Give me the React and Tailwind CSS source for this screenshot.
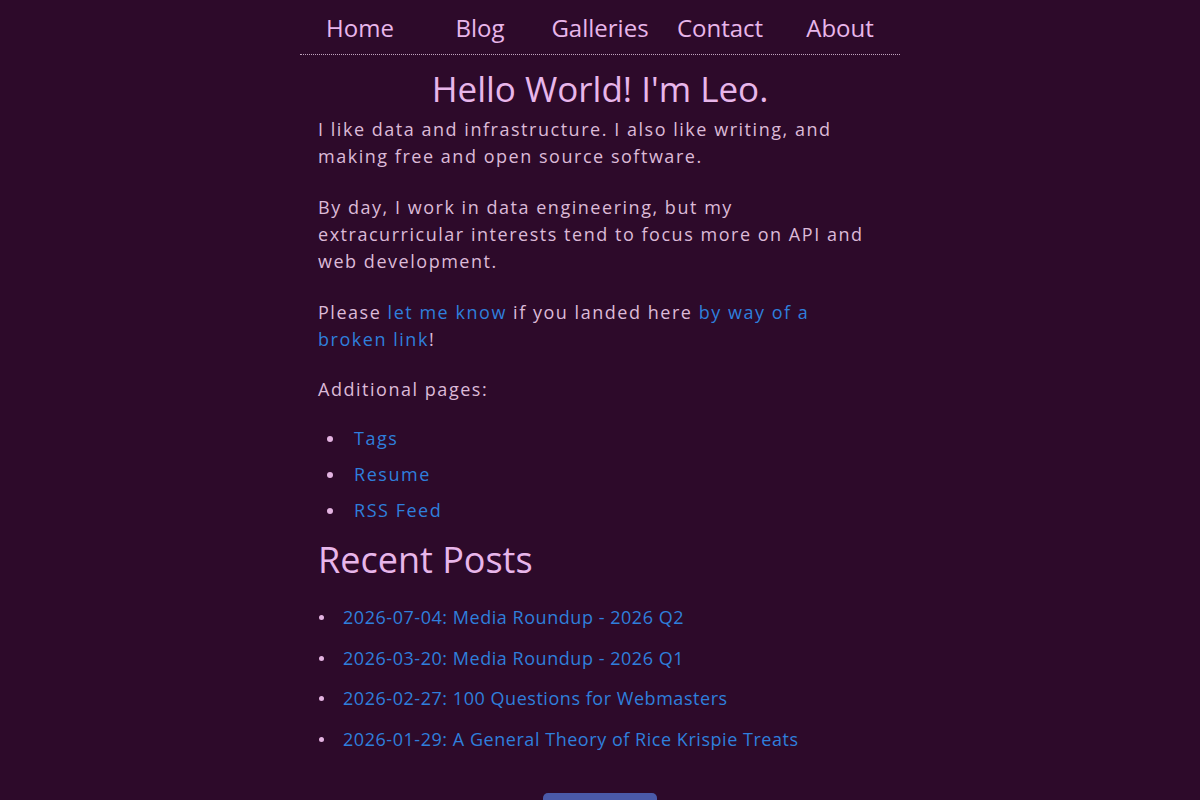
import React from 'react';

const navItems = ['Home', 'Blog', 'Galleries', 'Contact', 'About'];

const extraPages = ['Tags', 'Resume', 'RSS Feed'];

const recentPosts = [
  '2026-07-04: Media Roundup - 2026 Q2',
  '2026-03-20: Media Roundup - 2026 Q1',
  '2026-02-27: 100 Questions for Webmasters',
  '2026-01-29: A General Theory of Rice Krispie Treats',
];

const Link = ({ children }) => (
  <a href="#" className="text-[#2f7fdc] no-underline">
    {children}
  </a>
);

const App = () => {
  return (
    <div className="min-h-[800px] bg-[#2d0a2a] font-['Open_Sans',sans-serif] text-[#dcbad8]">
      <div className="mx-auto w-[600px]">
        <nav className="flex h-[55px] items-center border-b border-dotted border-[#bfa3bd] text-[24px] text-[#e8b6ea]">
          {navItems.map((item) => (
            <a key={item} href="#" className="w-[120px] pt-[2px] text-center">
              {item}
            </a>
          ))}
        </nav>

        <h1 className="mt-[12px] text-center text-[35px] leading-[44px] text-[#e8b6ea]">
          Hello World! I'm Leo.
        </h1>

        <div className="px-[18px] text-[18px] leading-[27px] tracking-[0.085em]">
          <p className="mt-[5px]">
            I like data and infrastructure. I also like writing, and making free and open source software.
          </p>
          <p className="mt-[24px]">
            By day, I work in data engineering, but my extracurricular interests tend to focus more on API and web
            development.
          </p>
          <p className="mt-[24px]">
            Please <Link>let me know</Link> if you landed here <Link>by way of a broken link</Link>!
          </p>
          <p className="mt-[23px]">Additional pages:</p>
          <ul className="mt-[22px] space-y-[9px]">
            {extraPages.map((page) => (
              <li key={page} className="flex items-center">
                <span className="ml-[9px] mr-[21px] h-[6px] w-[6px] rounded-full bg-[#e3b3e1]" />
                <Link>{page}</Link>
              </li>
            ))}
          </ul>

          <h2 className="mt-[14px] text-[36px] leading-[44px] tracking-normal text-[#e8b6ea]">Recent Posts</h2>
          <ul className="mt-[22px] space-y-[13.5px] tracking-[0.03em]">
            {recentPosts.map((post) => (
              <li key={post} className="flex items-center">
                <span className="ml-[1px] mr-[19px] h-[5px] w-[5px] rounded-full bg-[#e3b3e1]" />
                <Link>{post}</Link>
              </li>
            ))}
          </ul>
        </div>

        <div className="mt-[40px] flex justify-center">
          <button className="h-[36px] w-[114px] rounded-[5px] bg-[#4a5aa8] text-white" />
        </div>
      </div>
    </div>
  );
};

export default App;
